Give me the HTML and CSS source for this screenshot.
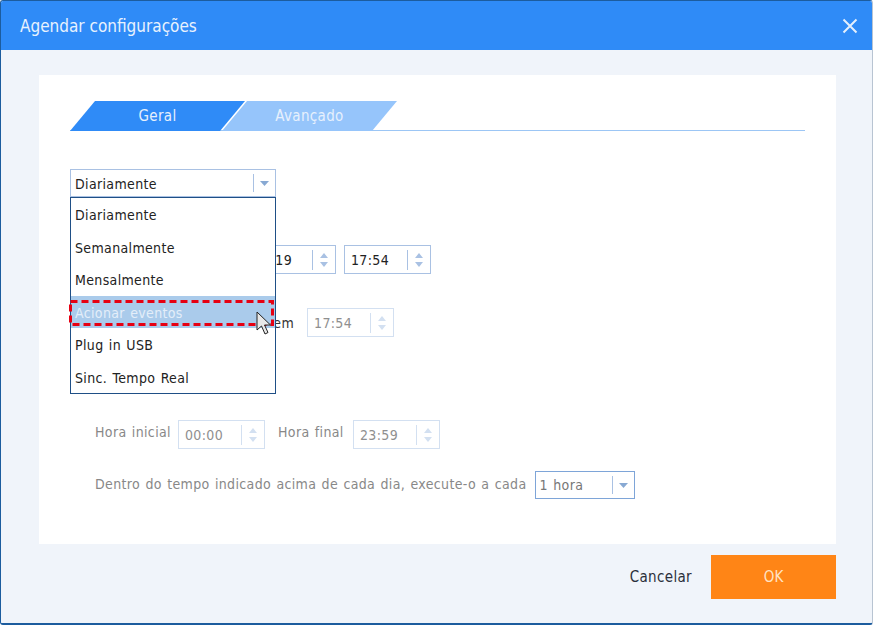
FILE: index.html
```html
<!DOCTYPE html>
<html lang="pt">
<head>
<meta charset="utf-8">
<title>Agendar configurações</title>
<link rel="stylesheet" href="styles.css">
</head>
<body>
<div class="window">
  <header class="titlebar">
    <span class="title">Agendar configurações</span>
    <svg class="close" width="16" height="16" viewBox="0 0 16 16"><path d="M1.5 1.5 14.5 14.5M14.5 1.5 1.5 14.5" stroke="#e4effd" stroke-width="2" fill="none"/></svg>
  </header>
  <main class="body">
    <section class="panel">
      <div class="tabs">
        <div class="tab active">Geral</div>
        <div class="tab inactive">Avançado</div>
      </div>

      <div class="row row-select">
        <div class="select main-select">
          <span class="value">Diariamente</span>
          <span class="divider"></span>
          <svg class="caret" width="9" height="5" viewBox="0 0 9 5"><path d="M0 0h9L4.500 5z"/></svg>
          <div class="menu">
            <div class="item">Diariamente</div>
            <div class="item">Semanalmente</div>
            <div class="item">Mensalmente</div>
            <div class="item selected">Acionar eventos
              <svg class="dashes" width="205" height="26" viewBox="0 0 205 26"><rect x="1.5" y="1.5" width="202" height="23" fill="none" stroke="#e60012" stroke-width="3" stroke-dasharray="7 4"/></svg>
              <svg class="cursor" width="19" height="25" viewBox="0 0 19 25"><path d="M1 1v18l4.500-4 3.500 8 3-1.500-3.500-7.500h6z" fill="#e8e8e8" stroke="#222" stroke-width="1"/></svg>
            </div>
            <div class="item">Plug in USB</div>
            <div class="item">Sinc. Tempo Real</div>
          </div>
        </div>
      </div>

      <div class="row row-date">
        <div class="spin date-box">
          <span class="spin-value">2019</span>
          <span class="divider"></span>
          <span class="arrows"><i class="up"></i><i class="down"></i></span>
        </div>
        <div class="spin time-box">
          <span class="spin-value">17:54</span>
          <span class="divider"></span>
          <span class="arrows"><i class="up"></i><i class="down"></i></span>
        </div>
      </div>

      <div class="row row-event">
        <span class="muted-dark">Iniciar em</span>
        <div class="spin time-box disabled">
          <span class="spin-value">17:54</span>
          <span class="divider"></span>
          <span class="arrows"><i class="up"></i><i class="down"></i></span>
        </div>
      </div>

      <div class="row row-hours">
        <span class="label">Hora inicial</span>
        <div class="spin time-box disabled">
          <span class="spin-value">00:00</span>
          <span class="divider"></span>
          <span class="arrows"><i class="up"></i><i class="down"></i></span>
        </div>
        <span class="label">Hora final</span>
        <div class="spin time-box disabled">
          <span class="spin-value">23:59</span>
          <span class="divider"></span>
          <span class="arrows"><i class="up"></i><i class="down"></i></span>
        </div>
      </div>

      <div class="row row-every">
        <span class="label">Dentro do tempo indicado acima de cada dia, execute-o a cada</span>
        <div class="select small-select">
          <span class="value grey">1 hora</span>
          <span class="divider"></span>
          <svg class="caret" width="9" height="5" viewBox="0 0 9 5"><path d="M0 0h9L4.500 5z"/></svg>
        </div>
      </div>
    </section>
    <footer class="footer">
      <span class="cancel">Cancelar</span>
      <button class="ok" type="button">OK</button>
    </footer>
  </main>
</div>
</body>
</html>
```
FILE: styles.css
```css
* { box-sizing: border-box; }
html, body { margin: 0; height: 100%; background: #fff; }
body {
  font-family: "DejaVu Sans Condensed", "DejaVu Sans", sans-serif;
  font-stretch: condensed;
  font-size: 14px;
  letter-spacing: 0.35px;
  word-spacing: 1px;
  color: #222;
  overflow: hidden;
}

.window {
  width: 873px; height: 625px;
  display: flex; flex-direction: column;
  border: 1px solid #1c5c9e;
  border-right-color: #b8c4d2;
  border-top-width: 1px;
  border-bottom-width: 2px;
  border-radius: 3px;
  overflow: hidden;
}
.titlebar {
  height: 49px; flex: none;
  background: #2f8bf7;
  display: flex; align-items: center; justify-content: space-between;
  padding: 0 14px 0 19px;
  color: #e8f2fe;
  font-size: 17px;
  letter-spacing: 0;
  word-spacing: 0;
}
.body { flex: 1; background: #f0f4fa; display: flex; flex-direction: column; padding: 25px 36px 0 38px; }

.panel {
  height: 469px; flex: none;
  background: #fff;
  padding: 26px 31px 0;
}
.tabs { display: flex; height: 30px; border-bottom: 1px solid #9cc6f5; }
.tab {
  width: 175px; height: 30px; flex: none;
  display: flex; align-items: center; justify-content: center;
  font-size: 15px;
  color: #e6f0fd;
  clip-path: polygon(25px 0, 100% 0, calc(100% - 25px) 100%, 0 100%);
}
.tab.active { background: #2f8bf7; }
.tab.inactive { background: #96c5fb; margin-left: -23px; }

.row { display: flex; align-items: center; }
.row-select { margin-top: 38px; }
.row-date { margin-top: 48px; gap: 8px; }
.row-event { margin-top: 34px; padding-left: 157px; gap: 13px; }
.row-hours { margin-top: 83px; padding-left: 25px; }
.row-every { margin-top: 22px; padding-left: 25px; gap: 8px; }
.row-every .label { position: relative; bottom: 1px; }

.select {
  position: relative;
  height: 28px;
  display: flex; align-items: center;
  border: 1px solid #a9c1e3;
  background: #fff;
}
.main-select { width: 206px; }
.small-select { width: 100px; border-color: #7ea5d8; }
.value { flex: 1; padding-left: 4px; padding-top: 2px; }
.value.grey { color: #777; padding-top: 0; }
.divider { width: 1px; height: 18px; background: #a9c1e3; flex: none; }
.caret { margin: 0 6px 0 6px; fill: #88a9d3; flex: none; }

.menu {
  position: absolute; left: -1px; top: 27px; z-index: 3;
  width: 206px; height: 197px;
  background: #fff;
  border: 1px solid #1f4f86;
}
.item {
  position: relative;
  height: 32.5px;
  line-height: 34px;
  padding-left: 4px;
}
.item.selected { background: #aacbeb; color: #e4eef9; }
.dashes { position: absolute; left: -2px; top: 4px; }
.cursor { position: absolute; left: 185px; top: 15px; }

.spin {
  display: flex; align-items: center;
  height: 29px;
  border: 1px solid #a9c1e3;
  background: #fff;
}
.spin .divider { height: 20px; }
.spin-value { flex: 1; padding-left: 6px; }
.date-box { width: 266px; }
.date-box .spin-value { text-align: right; padding-right: 20px; }
.time-box { width: 87px; }
.arrows { width: 22px; flex: none; display: flex; flex-direction: column; align-items: center; gap: 4px; }
.arrows i { display: block; width: 0; height: 0; border-left: 4.500px solid transparent; border-right: 4.500px solid transparent; }
.arrows .up { border-bottom: 5px solid #a9c1e3; }
.arrows .down { border-top: 5px solid #a9c1e3; }

.disabled { border-color: #d3e0f1; }
.disabled .spin-value { color: #8f8f8f; }
.disabled .divider { background: #d3e0f1; }
.disabled .arrows .up { border-bottom-color: #d3e0f1; }
.disabled .arrows .down { border-top-color: #d3e0f1; }

.label { color: #888; }
.muted-dark { color: #333; }
.row-hours .label:first-child { width: 83px; }
.row-hours .label:nth-child(3) { width: 75px; margin-left: 13px; }
.row-hours .label { position: relative; bottom: 3px; }

.footer {
  flex: 1;
  display: flex; align-items: flex-start; justify-content: flex-end;
  padding-top: 11px;
  gap: 19px;
}
.cancel { font-size: 15px; line-height: 44px; color: #2b2f3a; }
.ok {
  width: 125px; height: 44px;
  background: #ff8516; border: 0;
  font: inherit; font-size: 15px; color: #ffe3c4;
}
```
